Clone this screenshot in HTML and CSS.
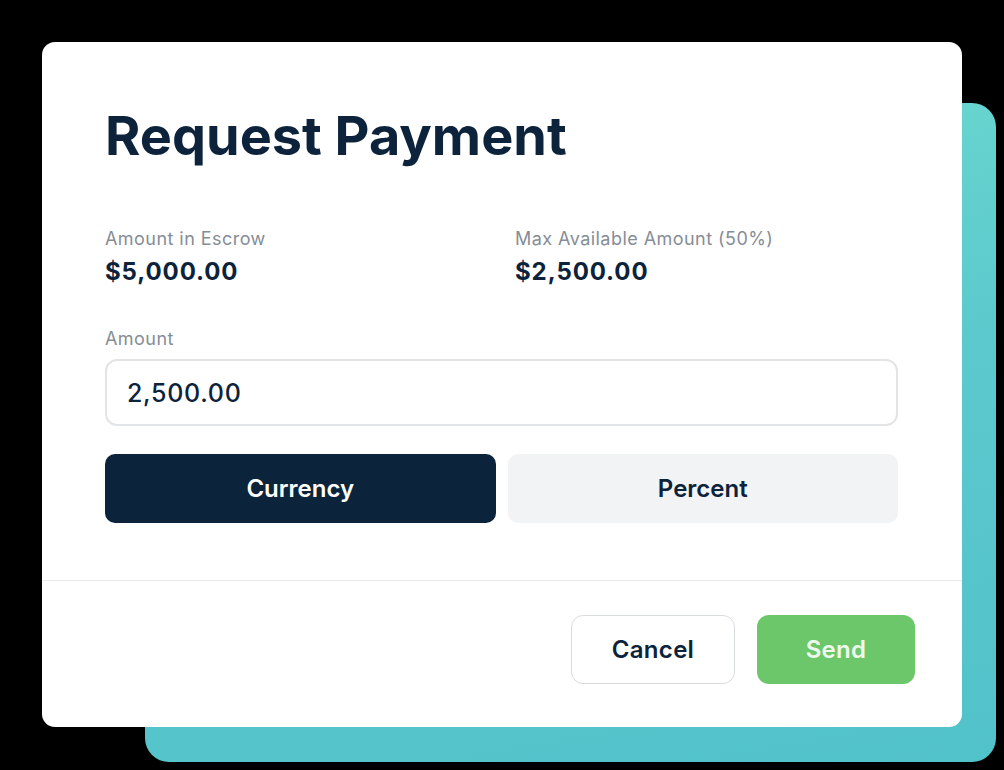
FILE: index.html
```html
<!DOCTYPE html>
<html lang="en">
<head>
<meta charset="utf-8">
<title>Request Payment</title>
<link rel="stylesheet" href="styles.css">
</head>
<body>
<div class="stage">
  <div class="backdrop"></div>
  <div class="dialog">
    <div class="dialog-body">
      <h1 class="title">Request Payment</h1>
      <div class="stats">
        <div class="stat">
          <div class="label">Amount in Escrow</div>
          <div class="value">$5,000.00</div>
        </div>
        <div class="stat">
          <div class="label">Max Available Amount (50%)</div>
          <div class="value">$2,500.00</div>
        </div>
      </div>
      <div class="field">
        <div class="label">Amount</div>
        <div class="input">2,500.00</div>
      </div>
      <div class="toggle">
        <div class="toggle-btn active">Currency</div>
        <div class="toggle-btn">Percent</div>
      </div>
    </div>
    <div class="dialog-footer">
      <div class="btn btn-cancel">Cancel</div>
      <div class="btn btn-send">Send</div>
    </div>
  </div>
</div>
</body>
</html>
```

FILE: styles.css
```css
* { box-sizing: border-box; }
html, body {
  margin: 0;
  padding: 0;
  background: #000;
}
body {
  width: 1004px;
  height: 770px;
  overflow: hidden;
  font-family: "Inter", "Liberation Sans", sans-serif;
  color: #0c233b;
}
.stage {
  display: grid;
  padding: 42px 0 0 42px;
}
.backdrop, .dialog {
  grid-area: 1 / 1;
}
.backdrop {
  margin: 61px 0 0 103px;
  width: 851px;
  height: 659px;
  border-radius: 24px;
  background: linear-gradient(170deg, #6edbd0 0%, #5cc9cd 45%, #52c2ca 100%);
}
.dialog {
  width: 920px;
  height: 685px;
  background: #fff;
  border-radius: 13px;
  display: flex;
  flex-direction: column;
  position: relative;
}
.dialog-body {
  padding: 61px 64px 0 63px;
  flex: 1;
}
.title {
  margin: 0;
  font-size: 54px;
  line-height: 66px;
  font-weight: 700;
  letter-spacing: 0;
  color: #0c233b;
}
.stats {
  display: grid;
  grid-template-columns: 382px 1fr;
  gap: 28px;
  margin-top: 58px;
}
.label {
  font-size: 18px;
  line-height: 24px;
  color: #868d96;
  letter-spacing: 0.45px;
}
.value {
  margin-top: 6px;
  font-size: 24px;
  line-height: 30px;
  font-weight: 700;
  letter-spacing: 0.9px;
  color: #0c233b;
}
.field {
  margin-top: 40px;
}
.input {
  margin-top: 8px;
  height: 67px;
  border: 2px solid #e2e4e7;
  border-radius: 12px;
  padding: 0 20px;
  display: flex;
  align-items: center;
  font-size: 25px;
  font-weight: 500;
  letter-spacing: 0.7px;
  color: #0c233b;
}
.toggle {
  margin-top: 28px;
  display: grid;
  grid-template-columns: 1fr 1fr;
  gap: 12px;
}
.toggle-btn {
  height: 69px;
  border-radius: 10px;
  background: #f1f3f5;
  display: flex;
  align-items: center;
  justify-content: center;
  font-size: 24px;
  font-weight: 600;
  letter-spacing: 0;
  color: #0c233b;
}
.toggle-btn.active {
  background: #0c243b;
  color: #fff;
}
.dialog-footer {
  border-top: 1px solid #e8eaec;
  padding: 34px 47px 43px 0;
  display: flex;
  justify-content: flex-end;
  gap: 22px;
}
.btn {
  height: 69px;
  border-radius: 12px;
  display: flex;
  align-items: center;
  justify-content: center;
  font-size: 24px;
  font-weight: 600;
  letter-spacing: 0.3px;
}
.btn-cancel {
  width: 164px;
  border: 1.5px solid #d9dcdf;
  color: #0c233b;
  background: #fff;
}
.btn-send {
  width: 158px;
  background: #6cc76a;
  color: #eefaed;
}
```
